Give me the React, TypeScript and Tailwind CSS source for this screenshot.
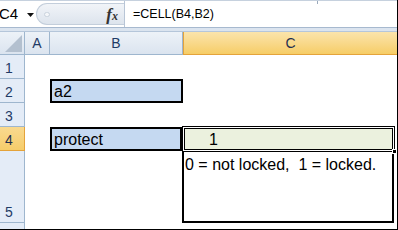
import React from 'react';

const font = { fontFamily: '"Liberation Sans", Arial, sans-serif' };

function RowHeader({ label, h, active }: { label: string; h: string; active?: boolean }) {
    return (
        <div
            className={`w-[25px] shrink-0 flex items-end pl-[5px] pb-[3px] text-[14px] leading-none border-r border-b ${h} ${active
                ? 'bg-gradient-to-b from-[#f9d98f] to-[#f6cd6a] border-[#e4a33b] text-[#1f2f4f]'
                : 'bg-[#e4ecf7] border-[#9eb6ce] text-[#1f3b66]'
                }`}
        >
            {label}
        </div>
    );
}

export default function App() {
    return (
        <div className="w-[398px] h-[230px] overflow-hidden bg-white border-r border-b border-black flex flex-col" style={font}>
            {/* formula bar */}
            <div className="relative h-[28px] shrink-0 flex border-t border-[#c6d1de] border-b border-b-[#a7b9cf] bg-white">
                <div className="relative w-[36px] shrink-0 flex items-center overflow-hidden">
                    <span className="-ml-[1px] text-[15px] text-black">C4</span>
                    <svg className="absolute left-[27px] top-[12px]" width="7" height="4" viewBox="0 0 7 4">
                        <path d="M0 0H7L3.5 4Z" fill="#111" />
                    </svg>
                </div>
                <div className="w-[88px] shrink-0 flex items-center">
                    <div className="h-[22px] flex-1 rounded-l-full border border-r-0 border-[#c3cedb] bg-gradient-to-b from-[#f1f4f8] to-[#dde4ed] flex items-center">
                        <div className="ml-[7px] w-[6px] h-[5px] rounded-full bg-[#f4f6f9] border border-[#c9d2dd]" />
                        <span className="ml-auto mr-[6px] italic font-bold text-[17px] text-[#333] leading-none" style={{ fontFamily: '"Liberation Serif", serif' }}>
                            f<span className="text-[12px]">x</span>
                        </span>
                    </div>
                </div>
                <div className="flex-1 flex items-center pl-[8px] border-l border-[#b8c5d6] text-[12.5px] text-black">
                    =CELL(B4,B2)
                </div>
                <div className="absolute left-[317px] top-0 w-px h-[3px] bg-[#9aa9bb]" />
            </div>
            <div className="h-[3px] shrink-0 bg-[#dbe4ef]" />

            {/* column headers */}
            <div className="h-[24px] shrink-0 flex border-t border-[#b5c6da]">
                <div className="relative w-[25px] shrink-0 border-r border-b border-[#9eb6ce] bg-gradient-to-b from-[#edf2f8] to-[#dbe4ef]">
                    <svg className="absolute left-[5px] top-[3px]" width="17" height="17" viewBox="0 0 17 17">
                        <path d="M17 0V17H0Z" fill="#b3c0cf" />
                    </svg>
                </div>
                <div className="w-[25px] shrink-0 flex items-center justify-center text-[14px] text-[#1f3b66] border-r border-b border-[#9eb6ce] bg-gradient-to-b from-[#edf2f8] to-[#dbe4ef]">
                    A
                </div>
                <div className="w-[133px] shrink-0 flex items-center justify-center text-[14px] text-[#1f3b66] border-r border-b border-[#9eb6ce] bg-gradient-to-b from-[#edf2f8] to-[#dbe4ef]">
                    B
                </div>
                <div className="flex-1 flex items-center justify-center text-[14px] text-[#1f2f4f] border-b border-l border-[#e4a33b] bg-gradient-to-b from-[#fbe4ab] to-[#f6cd66]">
                    C
                </div>
            </div>

            {/* row 1 */}
            <div className="h-[24px] shrink-0 flex">
                <RowHeader label="1" h="h-[24px]" />
            </div>

            {/* row 2 */}
            <div className="h-[24px] shrink-0 flex">
                <RowHeader label="2" h="h-[24px]" />
                <div className="w-[25px] shrink-0" />
                <div className="w-[133px] h-[24px] shrink-0 border-2 border-black bg-[#c5d9f1] flex items-end pl-[2px] text-[16px] leading-[18px] text-black">
                    a2
                </div>
            </div>

            {/* row 3 */}
            <div className="h-[24px] shrink-0 flex">
                <RowHeader label="3" h="h-[24px]" />
            </div>

            {/* row 4 */}
            <div className="h-[24px] shrink-0 flex">
                <RowHeader label="4" h="h-[24px]" active />
                <div className="w-[25px] shrink-0" />
                <div className="w-[132px] h-[24px] shrink-0 border-2 border-black bg-[#c5d9f1] flex items-end pl-[2px] text-[16px] leading-[18px] text-black">
                    protect
                </div>
                <div className="relative z-10 -mt-[1px] w-[213px] h-[26px] shrink-0 border border-black bg-white p-px">
                    <div className="h-full border border-black bg-[#ebf1de] flex items-end pl-[24px] text-[16px] leading-[18px] text-black">
                        1
                    </div>
                    <div className="absolute -right-[3px] -bottom-[3px] w-[5px] h-[5px] bg-black border border-white" />
                </div>
            </div>

            {/* row 5 */}
            <div className="h-[72px] shrink-0 flex">
                <RowHeader label="5" h="h-[72px]" />
                <div className="w-[157px] shrink-0" />
                <div className="w-[212px] h-[72px] shrink-0 border-2 border-t-0 border-black pl-[1px] pt-[4px] text-[16px] leading-[19px] text-black whitespace-pre">
                    0 = not locked,  1 = locked.
                </div>
            </div>

            {/* row 6 (partial) */}
            <div className="flex-1 flex">
                <div className="w-[25px] shrink-0 border-r border-[#9eb6ce] bg-[#e4ecf7]" />
            </div>
        </div>
    );
}
